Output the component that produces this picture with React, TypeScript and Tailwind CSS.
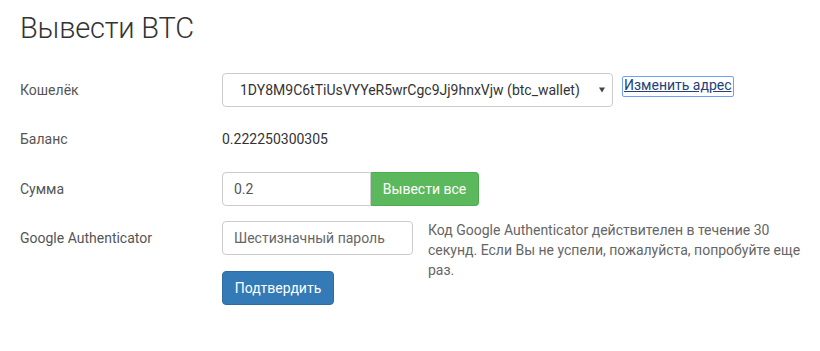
import React from "react";

export default function App() {
  const font = { fontFamily: "Roboto, 'Noto Sans', sans-serif" };
  return (
    <div className="w-[820px] h-[351px] bg-white text-[14px] leading-[20px] text-[#333]" style={font}>
      <div className="pl-[20px] pt-[12px]">
        <h2 className="text-[29px] leading-[33px] font-light text-[#333] m-0 tracking-[-0.2px]">Вывести BTC</h2>
        <div className="mt-[28px] flex flex-col">
          {/* Wallet */}
          <div className="flex items-start">
            <div className="w-[202px] pt-[7px] text-[#555]">Кошелёк</div>
            <div className="w-[391px] h-[34px] border border-[#ccc] rounded-[4px] flex items-center pl-[17px] pr-[7px] text-[#333]">
              <span className="flex-1 whitespace-nowrap">1DY8M9C6tTiUsVYYeR5wrCgc9Jj9hnxVjw (btc_wallet)</span>
              <svg width="6" height="6" viewBox="0 0 6 6" className="mr-[0px]">
                <path d="M0 0.5 L6 0.5 L3 5.5 Z" fill="#444" />
              </svg>
            </div>
            <a
              href="#"
              className="ml-[10px] mt-[4px] px-[1px] h-[19px] leading-[17px] text-[#23427c] underline outline outline-[1.5px] outline-[#6ea0f5] rounded-[1px]"
            >
              Изменить адрес
            </a>
          </div>
          {/* Balance */}
          <div className="flex items-start mt-[15px]">
            <div className="w-[202px] py-[7px] text-[#555]">Баланс</div>
            <div className="py-[7px] text-[#333]">0.222250300305</div>
          </div>
          {/* Sum */}
          <div className="flex items-start mt-[16px]">
            <div className="w-[202px] pt-[7px] text-[#555]">Сумма</div>
            <div className="flex">
              <div className="w-[149px] h-[34px] border border-[#ccc] rounded-l-[4px] flex items-center pl-[11px] text-[#555]">0.2</div>
              <button className="w-[108px] h-[34px] bg-[#5cb85c] border border-[#4cae4c] text-white rounded-r-[4px] border-l-0">Вывести все</button>
            </div>
          </div>
          {/* GA */}
          <div className="flex items-start mt-[15px]">
            <div className="w-[202px] pt-[7px] text-[#555]">Google Authenticator</div>
            <div className="flex flex-col">
              <div className="w-[191px] h-[34px] border border-[#ccc] rounded-[4px] flex items-center pl-[11px] text-[#666]">Шестизначный пароль</div>
              <button className="mt-[16px] w-[112px] h-[34px] bg-[#337ab7] border border-[#2e6da4] text-white rounded-[4px]">Подтвердить</button>
            </div>
            <div className="ml-[15px] w-[380px] text-[#666] leading-[20px] -mt-[1px]">
              Код Google Authenticator действителен в течение 30 секунд. Если Вы не успели, пожалуйста, попробуйте еще раз.
            </div>
          </div>
        </div>
      </div>
    </div>
  );
}
